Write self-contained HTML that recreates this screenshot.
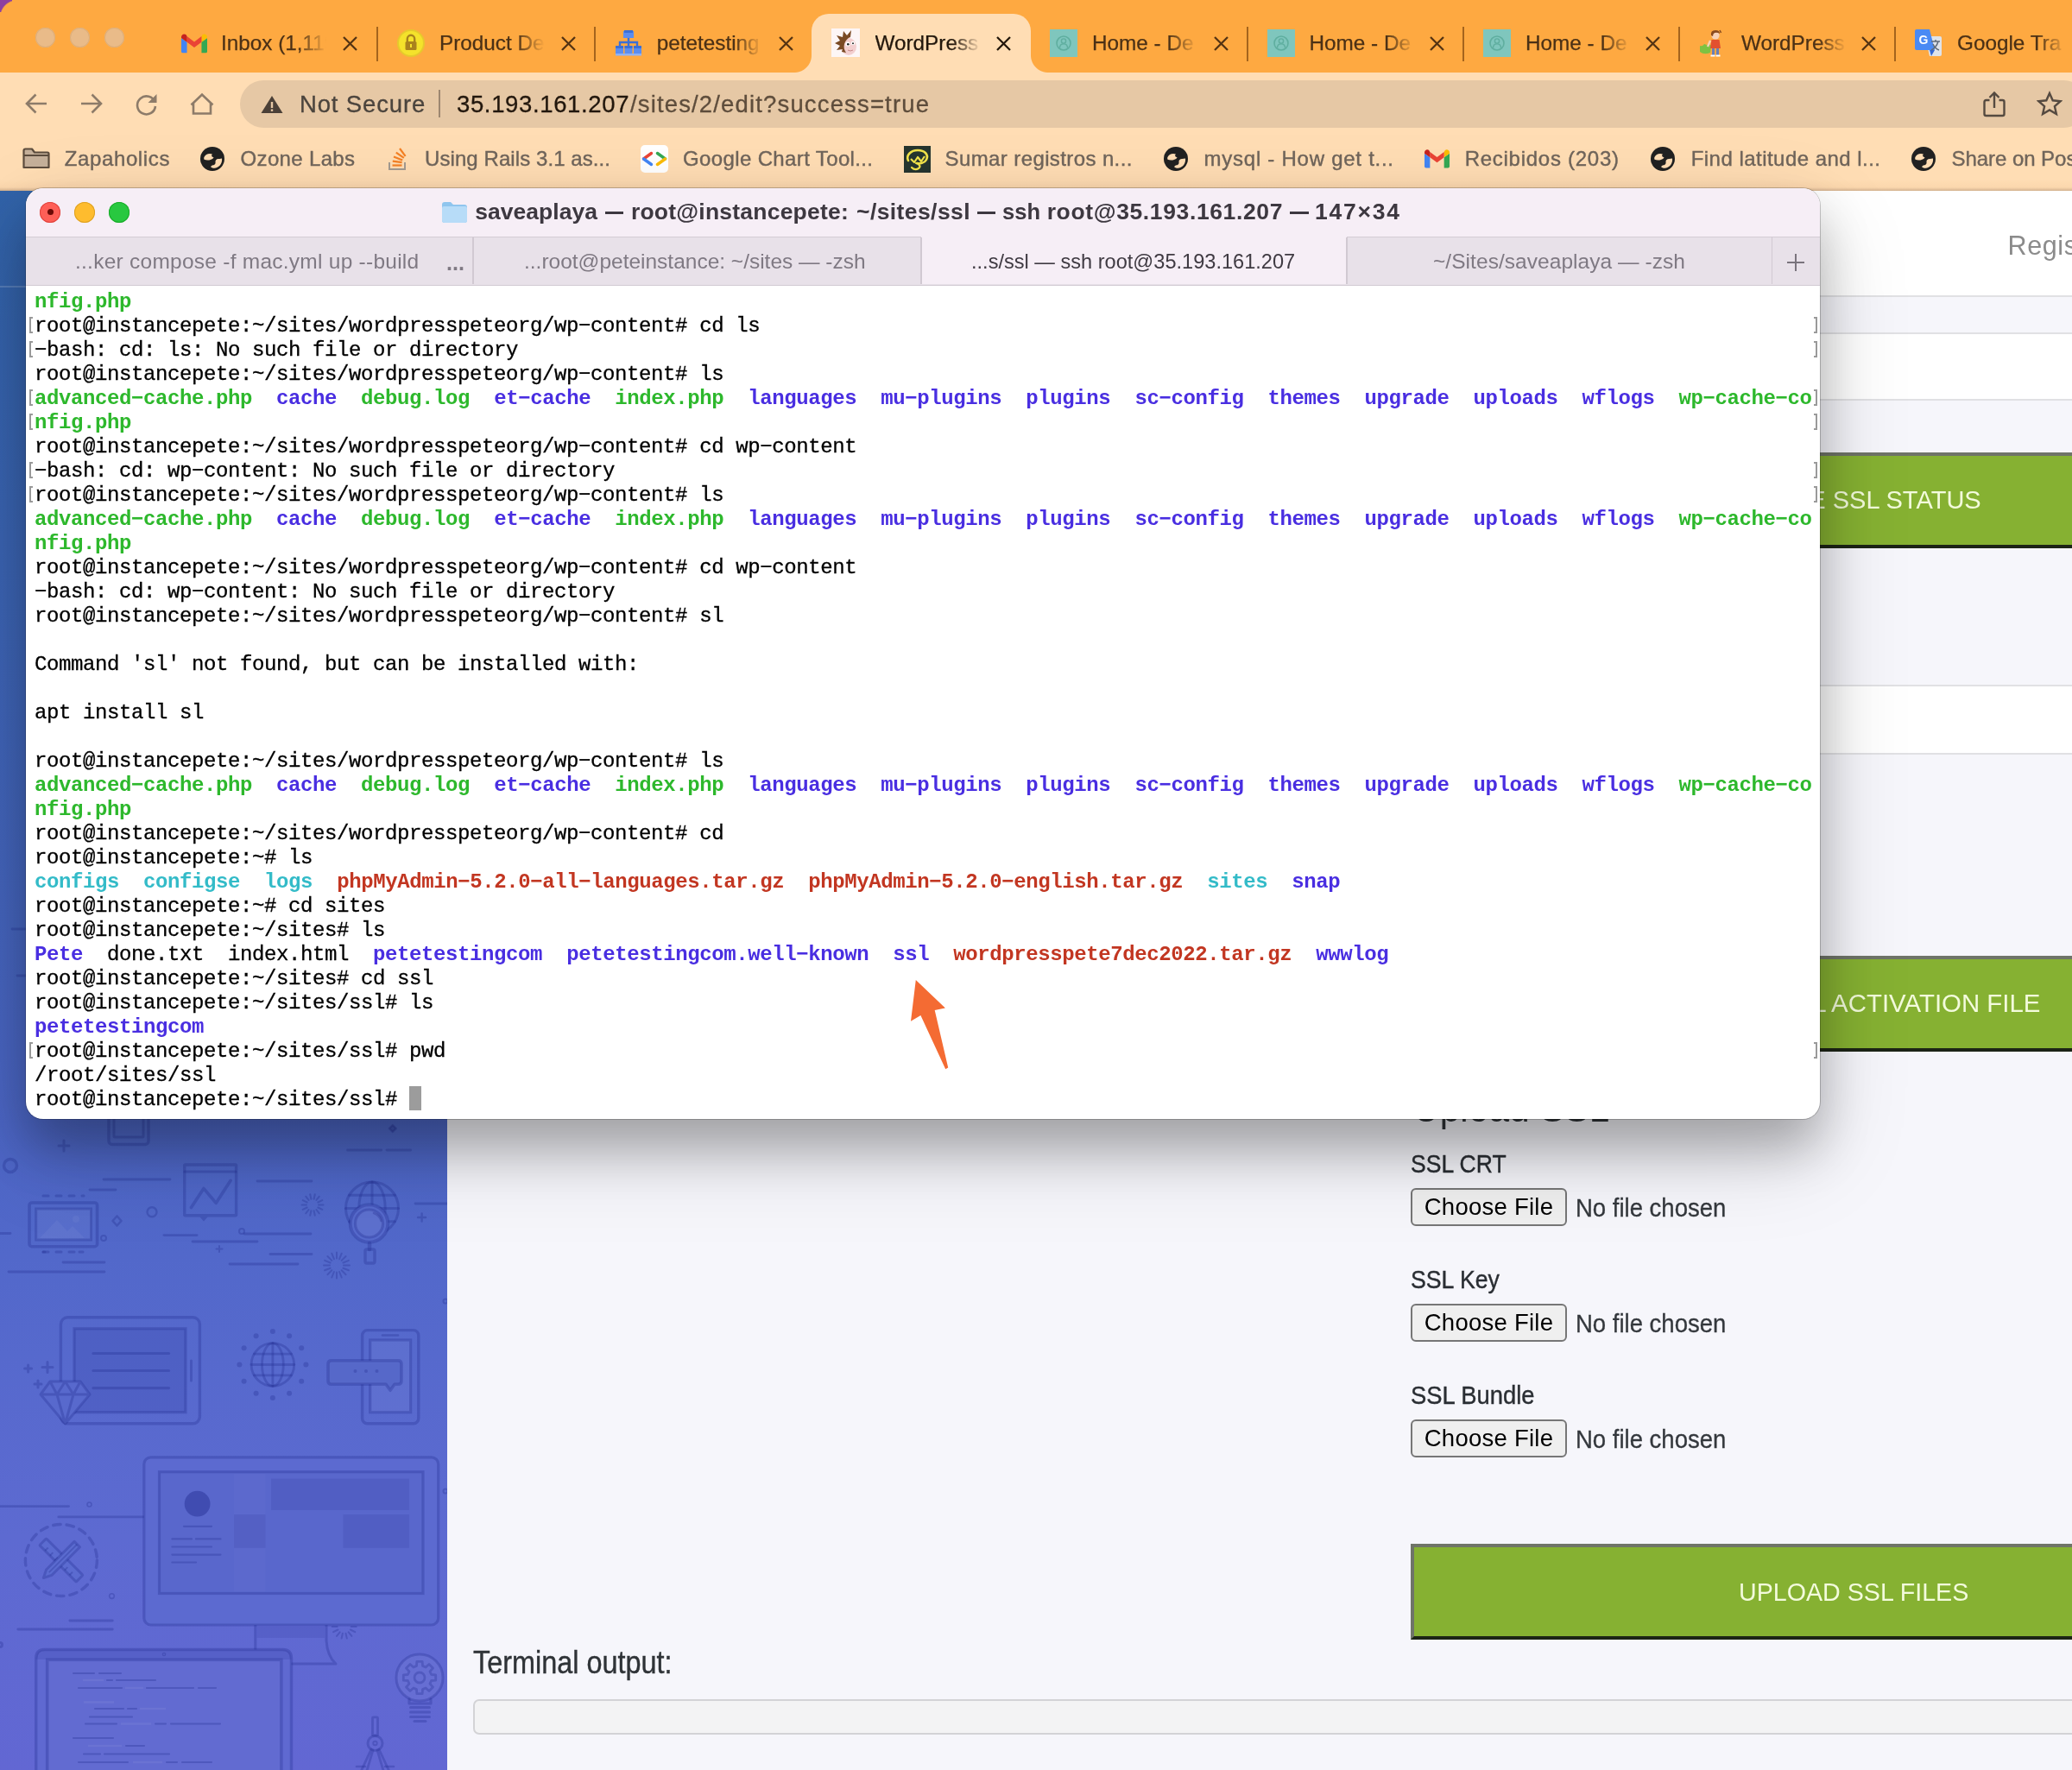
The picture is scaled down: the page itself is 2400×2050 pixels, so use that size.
<!DOCTYPE html>
<html>
<head>
<meta charset="utf-8">
<title>WordPress Pete</title>
<style>
*{box-sizing:border-box;margin:0;padding:0}
html,body{width:2400px;height:2050px;overflow:hidden;background:#f6f6fb;font-family:"Liberation Sans",sans-serif;}
.abs{position:absolute}
#root{position:absolute;left:0;top:0;width:2400px;height:2050px;overflow:hidden;will-change:transform}
/* ---------- browser chrome ---------- */
#tabstrip{position:absolute;left:0;top:0;width:2400px;height:84px;background:#fea941}
#toolbar{position:absolute;left:0;top:84px;width:2400px;height:137px;background:linear-gradient(#ffddb4 0,#ffddb4 124px,#fbd7ad 133px,#e3c19c 135.500px,#d2b08c 137px)}
.tl{position:absolute;top:31px;width:24px;height:24px;border-radius:50%;background:#e8b982;border:1px solid #dcab72}
.tab{position:absolute;top:0;height:84px;font-size:26px;color:#4a3520;white-space:nowrap}
.tab .t{position:absolute;top:34px;left:0;line-height:32px;overflow:hidden}
.tabx{position:absolute;top:36px;width:28px;height:28px}
.tsep{position:absolute;top:31px;width:2px;height:40px;background:#a86a22}
#acttab{position:absolute;left:940px;top:16px;width:254px;height:70px;background:#ffddb4;border-radius:20px 20px 0 0}
#acttab:before,#acttab:after{content:"";position:absolute;bottom:2px;width:20px;height:20px;background:radial-gradient(circle at 0 0,rgba(0,0,0,0) 19.5px,#ffddb4 20.5px)}
#acttab:before{left:-20px}
#acttab:after{right:-20px;background:radial-gradient(circle at 100% 0,rgba(0,0,0,0) 19.5px,#ffddb4 20.5px)}
#urlpill{position:absolute;left:278px;top:93px;width:2140px;height:55px;border-radius:28px;background:#e6c8a5}
.tbtxt{position:absolute;font-size:26px;line-height:32px;white-space:nowrap}
.bm{position:absolute;top:168px;font-size:23.5px;line-height:32px;color:#6b625a;white-space:nowrap}

#term{position:absolute;left:30px;top:217.5px;width:2078px;height:1078px;border-radius:20px;background:#fff;
 box-shadow:0 0 0 1px rgba(0,0,0,.20),0 34px 56px 0 rgba(0,0,0,.25),0 40px 110px 0 rgba(0,0,0,.15);}
#term .clip{position:absolute;left:0;top:0;width:100%;height:100%;border-radius:20px;overflow:hidden}
#ttitle{position:absolute;left:0;top:0;width:100%;height:56.5px;background:#f6eef6}
#ttabs{position:absolute;left:0;top:56.5px;width:100%;height:56.5px;background:#e8e1e9;border-top:1.500px solid #d4ccd5;border-bottom:1.500px solid #d2cbd3}
#ttabs .act{position:absolute;top:-1.500px;height:55.500px;background:#f6eef6}
#ttabs .sep{position:absolute;top:0;width:1.500px;height:54px;background:#d1c9d2}
#tpre{position:absolute;left:10px;top:118.500px;font-family:"Liberation Mono",monospace;font-size:24px;line-height:28px;letter-spacing:-0.400px;color:#000;white-space:pre;-webkit-text-stroke:.3px #000}
#tpre b{font-weight:bold;-webkit-text-stroke:0}
#tpre .g{color:#2db82c}#tpre .b{color:#492ee1}#tpre .c{color:#33bbc8}#tpre .r{color:#c23621}
.brk{position:absolute;width:4px;height:19px;border:2px solid #9a9a9a}
.brk.l{left:4px;border-right:none}
.brk.r{left:2070.500px;border-left:none}

#page{position:absolute;left:0;top:220px;width:2400px;height:1830px;background:#f6f6fb;overflow:hidden}
#side{position:absolute;left:0;top:0;width:518px;height:1830px;background:linear-gradient(180deg,#3163a9 0,#3b65b4 400px,#4a66c4 1000px,#5669cd 1350px,#5d6ad1 1560px,#6267d3 1830px)}
.stripe{position:absolute;left:518px;width:1900px}
.gbtn{position:absolute;height:111px;background:#86b132;border-top:4px solid #6f7468;border-bottom:4.500px solid #1c2416;border-left:4px solid #6f7468}
.cfb{position:absolute;left:1634.400px;width:180.200px;height:44px;border:2px solid #767676;border-radius:6px;background:#efefef;
 font-size:27.500px;line-height:39px;color:#000;text-align:center;white-space:nowrap;letter-spacing:.25px}
</style>
</head>
<body>
<div id="root">

<!-- ================= PAGE (behind) ================= -->
<div id="page">
<div id="side"><svg style="position:absolute;left:0;top:0;filter:blur(.7px)" width="518" height="1830" viewBox="0 220 518 1830" fill="none" ><rect x="126" y="1280" width="46" height="45.5" rx="4" fill="none" stroke="rgba(30,40,140,.29)" stroke-width="3.4"/>
<rect x="132" y="1280" width="34" height="37" rx="1" fill="none" stroke="rgba(30,40,140,.29)" stroke-width="3"/>
<path d="M68 1327H80M74 1321V1333" stroke="rgba(30,40,140,.29)" stroke-width="3" stroke-linecap="round"/>
<circle cx="12" cy="1350" r="7.5" fill="none" stroke="rgba(30,40,140,.29)" stroke-width="3.4"/>
<path d="M120 1366L197 1366" stroke="rgba(30,40,140,.29)" stroke-width="2.8" stroke-linecap="round"/>
<path d="M104 1378L134 1378" stroke="rgba(30,40,140,.29)" stroke-width="2.8" stroke-linecap="round"/>
<rect x="34" y="1393" width="78.6" height="50.7" rx="3" fill="none" stroke="rgba(30,40,140,.29)" stroke-width="3.6"/>
<rect x="41.7" y="1400" width="63.8" height="36" rx="0" fill="rgba(255,255,255,.045)" stroke="rgba(30,40,140,.29)" stroke-width="3"/>
<path d="M46 1434L66 1413L78 1426L84 1420L98 1434Z" fill="rgba(255,255,255,.045)"/>
<circle cx="88" cy="1412" r="4" fill="rgba(255,255,255,.045)"/>
<path d="M50 1385L56 1385" stroke="rgba(30,40,140,.29)" stroke-width="3" stroke-linecap="round"/>
<path d="M50 1450L56 1450" stroke="rgba(30,40,140,.29)" stroke-width="3" stroke-linecap="round"/>
<path d="M65 1385L71 1385" stroke="rgba(30,40,140,.29)" stroke-width="3" stroke-linecap="round"/>
<path d="M65 1450L71 1450" stroke="rgba(30,40,140,.29)" stroke-width="3" stroke-linecap="round"/>
<path d="M80 1385L86 1385" stroke="rgba(30,40,140,.29)" stroke-width="3" stroke-linecap="round"/>
<path d="M80 1450L86 1450" stroke="rgba(30,40,140,.29)" stroke-width="3" stroke-linecap="round"/>
<path d="M95 1385L97 1385" stroke="rgba(30,40,140,.29)" stroke-width="3" stroke-linecap="round"/>
<path d="M50 1450L52 1450" stroke="rgba(30,40,140,.29)" stroke-width="3" stroke-linecap="round"/>
<path d="M92 1450L96 1450" stroke="rgba(30,40,140,.29)" stroke-width="3" stroke-linecap="round"/>
<path d="M73 1462L121 1462" stroke="rgba(30,40,140,.29)" stroke-width="2.8" stroke-linecap="round"/>
<path d="M10 1473L121 1473" stroke="rgba(30,40,140,.29)" stroke-width="2.8" stroke-linecap="round"/>
<path d="M0 1428.5L12 1428.5" stroke="rgba(30,40,140,.29)" stroke-width="2.8" stroke-linecap="round"/>
<path d="M14 1076L30 1076" stroke="rgba(30,40,140,.29)" stroke-width="2.8" stroke-linecap="round"/>
<path d="M20 1130L30 1130" stroke="rgba(30,40,140,.29)" stroke-width="2.8" stroke-linecap="round"/>
<rect x="213.7" y="1349" width="59.9" height="58.7" rx="1" fill="none" stroke="rgba(30,40,140,.29)" stroke-width="3.4"/>
<path d="M214 1357L273 1357" stroke="rgba(30,40,140,.29)" stroke-width="3" stroke-linecap="round"/>
<path d="M221.5 1398.6L235.9 1376.4L250.2 1393.4L267.1 1367.3" fill="none" stroke="rgba(30,40,140,.29)" stroke-width="3.6" stroke-linejoin="round" stroke-linecap="round"/>
<path d="M231.500 1409.500h9l-4.500 5z" fill="rgba(30,40,140,.29)"/>
<path d="M135.500 1408.500l5 5.500-5 5.500-5-5.500z" fill="none" stroke="rgba(30,40,140,.29)" stroke-width="2.6" stroke-linejoin="round" stroke-linecap="round"/>
<circle cx="176" cy="1403.8" r="5.5" fill="none" stroke="rgba(30,40,140,.29)" stroke-width="2.4"/>
<circle cx="120" cy="1434" r="3" fill="none" stroke="rgba(30,40,140,.29)" stroke-width="2"/>
<circle cx="280" cy="1426" r="3" fill="none" stroke="rgba(30,40,140,.29)" stroke-width="2"/>
<path d="M298 1368L361 1368" stroke="rgba(30,40,140,.29)" stroke-width="2.8" stroke-linecap="round"/>
<path d="M190 1430.6L228 1430.6" stroke="rgba(30,40,140,.29)" stroke-width="2.8" stroke-linecap="round"/>
<path d="M283 1429L360 1429" stroke="rgba(30,40,140,.29)" stroke-width="2.8" stroke-linecap="round"/>
<path d="M223 1438L298 1438" stroke="rgba(30,40,140,.29)" stroke-width="2.8" stroke-linecap="round"/>
<path d="M313 1452.5L361 1452.5" stroke="rgba(30,40,140,.29)" stroke-width="2.8" stroke-linecap="round"/>
<path d="M266 1464L345 1464" stroke="rgba(30,40,140,.29)" stroke-width="2.8" stroke-linecap="round"/>
<path d="M250.5 1446.5H257.5M254 1443.0V1450.0" stroke="rgba(30,40,140,.29)" stroke-width="2" stroke-linecap="round"/>
<path d="M369.0 1395.5L374.5 1395.5M368.3 1398.5L373.3 1400.9M366.4 1401.0L369.8 1405.3M363.6 1402.3L364.8 1407.7M360.4 1402.3L359.2 1407.7M357.6 1401.0L354.2 1405.3M355.7 1398.5L350.7 1400.9M355.0 1395.5L349.5 1395.5M355.7 1392.5L350.7 1390.1M357.6 1390.0L354.2 1385.7M360.4 1388.7L359.2 1383.3M363.6 1388.7L364.8 1383.3M366.4 1390.0L369.8 1385.7M368.3 1392.5L373.3 1390.1" stroke="rgba(30,40,140,.29)" stroke-width="2" stroke-linecap="round"/>
<path d="M398.0 1465.6L405.0 1465.6M397.4 1468.7L403.9 1471.3M395.7 1471.3L400.6 1476.2M393.1 1473.0L395.7 1479.5M390.0 1473.6L390.0 1480.6M386.9 1473.0L384.3 1479.5M384.3 1471.3L379.4 1476.2M382.6 1468.7L376.1 1471.3M382.0 1465.6L375.0 1465.6M382.6 1462.5L376.1 1459.9M384.3 1459.9L379.4 1455.0M386.9 1458.2L384.3 1451.7M390.0 1457.6L390.0 1450.6M393.1 1458.2L395.7 1451.7M395.7 1459.9L400.6 1455.0M397.4 1462.5L403.9 1459.9" stroke="rgba(30,40,140,.29)" stroke-width="2" stroke-linecap="round"/>
<circle cx="431" cy="1399.5" r="30.5" fill="none" stroke="rgba(30,40,140,.29)" stroke-width="3"/><ellipse cx="431" cy="1399.5" rx="15.2" ry="30.5" fill="none" stroke="rgba(30,40,140,.29)" stroke-width="3"/><path d="M431 1369.0L431 1430.0" stroke="rgba(30,40,140,.29)" stroke-width="3" stroke-linecap="round"/><path d="M400.5 1399.5L461.5 1399.5" stroke="rgba(30,40,140,.29)" stroke-width="3" stroke-linecap="round"/><path d="M404.6 1384.25L457.4 1384.25" stroke="rgba(30,40,140,.29)" stroke-width="3" stroke-linecap="round"/><path d="M404.6 1414.75L457.4 1414.75" stroke="rgba(30,40,140,.29)" stroke-width="3" stroke-linecap="round"/>
<circle cx="427.500" cy="1417" r="22" fill="#566acc"/>
<circle cx="427.5" cy="1417" r="21.8" fill="none" stroke="rgba(30,40,140,.29)" stroke-width="4"/>
<circle cx="427.5" cy="1417" r="16" fill="rgba(255,255,255,.045)" stroke="rgba(30,40,140,.29)" stroke-width="3.2"/>
<path d="M433 1405q7 2.500 8.500 9" fill="none" stroke="rgba(30,40,140,.29)" stroke-width="2.6" stroke-linejoin="round" stroke-linecap="round"/>
<path d="M428 1440L428 1447" stroke="rgba(30,40,140,.29)" stroke-width="4.5" stroke-linecap="round"/>
<rect x="423" y="1447" width="11" height="16" rx="2" fill="none" stroke="rgba(30,40,140,.29)" stroke-width="3.4"/>
<path d="M402.6 1332L441.7 1332" stroke="rgba(30,40,140,.29)" stroke-width="2.8" stroke-linecap="round"/>
<path d="M448 1332L475.6 1332" stroke="rgba(30,40,140,.29)" stroke-width="2.8" stroke-linecap="round"/>
<path d="M454.800 1303l4 4-4 4-4-4z" fill="rgba(30,40,140,.29)" stroke="rgba(30,40,140,.29)" stroke-width="2.4" stroke-linejoin="round" stroke-linecap="round"/>
<path d="M481 1394L518 1394" stroke="rgba(30,40,140,.29)" stroke-width="2.8" stroke-linecap="round"/>
<path d="M484.1 1410H493.1M488.6 1405.5V1414.5" stroke="rgba(30,40,140,.29)" stroke-width="2.4" stroke-linecap="round"/>
<circle cx="516" cy="1507" r="2.5" fill="none" stroke="rgba(30,40,140,.29)" stroke-width="2"/>
<rect x="70.4" y="1525.8" width="161.0" height="123.0" rx="8" fill="none" stroke="rgba(30,40,140,.29)" stroke-width="3.4"/>
<rect x="86" y="1538.8" width="129" height="96.9" rx="0" fill="rgba(30,40,140,.13)" stroke="rgba(30,40,140,.29)" stroke-width="3.2"/>
<path d="M108 1567.5L195.5 1567.5" stroke="rgba(30,40,140,.29)" stroke-width="3.2" stroke-linecap="round"/>
<path d="M108 1587.5L195.5 1587.5" stroke="rgba(30,40,140,.29)" stroke-width="3.2" stroke-linecap="round"/>
<path d="M108 1607.6L195.5 1607.6" stroke="rgba(30,40,140,.29)" stroke-width="3.2" stroke-linecap="round"/>
<path d="M221.5 1576L221.5 1599" stroke="rgba(30,40,140,.29)" stroke-width="3" stroke-linecap="round"/>
<path d="M47 1615L58 1600H93L104 1615L75.500 1649Z" fill="#5869cd"/>
<path d="M47 1615L58 1600H93L104 1615L75.500 1649ZM47 1615H104M58 1600L66 1615L75.500 1600L85 1615L93 1600M66 1615L75.500 1649L85 1615" fill="none" stroke="rgba(30,40,140,.29)" stroke-width="3" stroke-linejoin="round" stroke-linecap="round"/>
<path d="M28.6 1585H36.6M32.6 1581V1589" stroke="rgba(30,40,140,.29)" stroke-width="3" stroke-linecap="round"/>
<path d="M49 1583.6H61M55 1577.6V1589.6" stroke="rgba(30,40,140,.29)" stroke-width="3" stroke-linecap="round"/>
<path d="M40 1603H48M44 1599V1607" stroke="rgba(30,40,140,.29)" stroke-width="3" stroke-linecap="round"/>
<circle cx="315.9" cy="1580.5" r="24.8" fill="none" stroke="rgba(30,40,140,.29)" stroke-width="2.8"/><ellipse cx="315.9" cy="1580.5" rx="12.4" ry="24.8" fill="none" stroke="rgba(30,40,140,.29)" stroke-width="2.8"/><path d="M315.9 1555.7L315.9 1605.3" stroke="rgba(30,40,140,.29)" stroke-width="2.8" stroke-linecap="round"/><path d="M291.09999999999997 1580.5L340.7 1580.5" stroke="rgba(30,40,140,.29)" stroke-width="2.8" stroke-linecap="round"/><path d="M294.4 1568.1L337.4 1568.1" stroke="rgba(30,40,140,.29)" stroke-width="2.8" stroke-linecap="round"/><path d="M294.4 1592.9L337.4 1592.9" stroke="rgba(30,40,140,.29)" stroke-width="2.8" stroke-linecap="round"/>
<circle cx="315.9" cy="1619.0" r="3" fill="rgba(30,40,140,.29)"/>
<circle cx="296.6" cy="1613.8" r="3" fill="rgba(30,40,140,.29)"/>
<circle cx="282.6" cy="1599.8" r="3" fill="rgba(30,40,140,.29)"/>
<circle cx="277.4" cy="1580.5" r="3" fill="rgba(30,40,140,.29)"/>
<circle cx="282.6" cy="1561.2" r="3" fill="rgba(30,40,140,.29)"/>
<circle cx="296.6" cy="1547.2" r="3" fill="rgba(30,40,140,.29)"/>
<circle cx="315.9" cy="1542.0" r="3" fill="rgba(30,40,140,.29)"/>
<circle cx="335.1" cy="1547.2" r="3" fill="rgba(30,40,140,.29)"/>
<circle cx="349.2" cy="1561.2" r="3" fill="rgba(30,40,140,.29)"/>
<circle cx="354.4" cy="1580.5" r="3" fill="rgba(30,40,140,.29)"/>
<circle cx="349.2" cy="1599.8" r="3" fill="rgba(30,40,140,.29)"/>
<circle cx="335.1" cy="1613.8" r="3" fill="rgba(30,40,140,.29)"/>
<rect x="419.6" y="1540.6" width="65.2" height="108.2" rx="6" fill="none" stroke="rgba(30,40,140,.29)" stroke-width="3.4"/>
<rect x="428.7" y="1552" width="46.9" height="83.7" rx="0" fill="rgba(255,255,255,.045)" stroke="rgba(30,40,140,.29)" stroke-width="3.2"/>
<path d="M443 1546.5L461 1546.5" stroke="rgba(30,40,140,.29)" stroke-width="2.6" stroke-linecap="round"/>
<path d="M384 1575.800H461q4 0 4 4v19.500q0 4-4 4h-4l-5 7-5-7H384q-4 0-4-4v-19.500q0-4 4-4z" fill="#5668c9" stroke="rgba(30,40,140,.29)" stroke-width="3.600" stroke-linejoin="round"/>
<circle cx="411.5" cy="1588" r="2" fill="rgba(30,40,140,.29)"/>
<circle cx="424" cy="1588" r="2" fill="rgba(30,40,140,.29)"/>
<circle cx="436.5" cy="1588" r="2" fill="rgba(30,40,140,.29)"/>
<circle cx="516" cy="1727" r="2.5" fill="none" stroke="rgba(30,40,140,.29)" stroke-width="2"/>
<path d="M0 1744.6L79.5 1744.6" stroke="rgba(30,40,140,.29)" stroke-width="2.8" stroke-linecap="round"/>
<path d="M67.8 1756.9L166.8 1756.9" stroke="rgba(30,40,140,.29)" stroke-width="2.8" stroke-linecap="round"/>
<circle cx="103.5" cy="1742.5" r="2.5" fill="none" stroke="rgba(30,40,140,.29)" stroke-width="1.6"/>
<circle cx="129.5" cy="1848.6" r="2.8" fill="none" stroke="rgba(30,40,140,.29)" stroke-width="1.6"/>
<path d="M295.800 1882V1911M378 1882V1900Q379 1918 389 1927H337" fill="none" stroke="rgba(30,40,140,.29)" stroke-width="3" stroke-linejoin="round" stroke-linecap="round"/>
<rect x="297.5" y="1884" width="78.5" height="13" rx="0" fill="rgba(30,40,140,.13)"/>
<path d="M406.7 1884.0L412.7 1884.0M405.9 1887.5L411.3 1890.1M403.7 1890.3L407.4 1894.9M400.5 1891.8L401.8 1897.6M396.9 1891.8L395.6 1897.6M393.7 1890.3L390.0 1894.9M391.5 1887.5L386.1 1890.1M390.7 1884.0L384.7 1884.0M391.5 1880.5L386.1 1877.9M393.7 1877.7L390.0 1873.1M396.9 1876.2L395.6 1870.4M400.5 1876.2L401.8 1870.4M403.7 1877.7L407.4 1873.1M405.9 1880.5L411.3 1877.9" stroke="rgba(30,40,140,.29)" stroke-width="2" stroke-linecap="round"/>
<rect x="166.800" y="1687.800" width="340.900" height="194.200" rx="9" fill="#5c6ad0"/>
<rect x="166.8" y="1687.8" width="340.9" height="194.2" rx="8" fill="none" stroke="rgba(30,40,140,.29)" stroke-width="3.2"/>
<rect x="184.5" y="1704.7" width="305.5" height="140.8" rx="0" fill="rgba(30,40,140,.04)" stroke="rgba(30,40,140,.29)" stroke-width="3.2"/>
<rect x="271" y="1707" width="36.5" height="136.5" rx="0" fill="rgba(255,255,255,.02)"/>
<circle cx="228.600" cy="1741.700" r="14.900" fill="rgba(30,40,140,.42)"/>
<path d="M213 1767.8L245 1767.8" stroke="rgba(30,40,140,.29)" stroke-width="2.2" stroke-linecap="round"/>
<path d="M199.4 1782.4L222 1782.4" stroke="rgba(30,40,140,.29)" stroke-width="2.2" stroke-linecap="round"/>
<path d="M227 1782.4L255.4 1782.4" stroke="rgba(30,40,140,.29)" stroke-width="2.2" stroke-linecap="round"/>
<path d="M199.4 1791.5L245 1791.5" stroke="rgba(30,40,140,.29)" stroke-width="2.2" stroke-linecap="round"/>
<path d="M199.4 1800.6L255.4 1800.6" stroke="rgba(30,40,140,.29)" stroke-width="2.2" stroke-linecap="round"/>
<path d="M199.4 1809.5L227 1809.5" stroke="rgba(30,40,140,.29)" stroke-width="2.2" stroke-linecap="round"/>
<rect x="314" y="1712.5" width="160" height="36.5" rx="0" fill="rgba(30,40,140,.13)"/>
<rect x="271" y="1754" width="36.5" height="38.8" rx="0" fill="rgba(30,40,140,.13)"/>
<rect x="397.4" y="1754" width="76.6" height="38.8" rx="0" fill="rgba(30,40,140,.13)"/>
<circle cx="70.900" cy="1807" r="41.500" fill="none" stroke="rgba(30,40,140,.29)" stroke-width="3.400" stroke-dasharray="8.500 7" stroke-linecap="round"/>
<g transform="rotate(-45 70.900 1807)"><rect x="65.400" y="1777" width="11" height="60" rx="1" fill="#5b6bd0" stroke="rgba(30,40,140,.29)" stroke-width="3"/><path d="M65.400 1786h5M65.400 1794h5M65.400 1802h5M65.400 1810h5M65.400 1818h5M65.400 1826h5" stroke="rgba(30,40,140,.29)" stroke-width="2"/></g>
<g transform="rotate(45 70.900 1807)"><path d="M66.400 1781h9v46l-4.500 9-4.500-9z" fill="#5b6bd0" stroke="rgba(30,40,140,.29)" stroke-width="3" stroke-linejoin="round"/><path d="M70.900 1781v46" stroke="rgba(30,40,140,.29)" stroke-width="2"/></g>
<path d="M80.8 1877L130.3 1877" stroke="rgba(30,40,140,.29)" stroke-width="2.8" stroke-linecap="round"/>
<path d="M20.8 1887L130.3 1887" stroke="rgba(30,40,140,.29)" stroke-width="2.8" stroke-linecap="round"/>
<circle cx="0" cy="1905" r="2.5" fill="none" stroke="rgba(30,40,140,.29)" stroke-width="3"/>
<path d="M41.700 2060V1921q0-10.500 10-10.500H327.500q10 0 10 10.500V2060z" fill="#5f69d1" stroke="rgba(30,40,140,.29)" stroke-width="3.400"/>
<path d="M41.700 1922H337.500V1921q0-10.500-10-10.500H51.700q-10 0-10 10.500z" fill="rgba(30,40,140,.13)"/>
<rect x="54.7" y="1922.3" width="271.1" height="137.7" rx="0" fill="rgba(255,255,255,.02)" stroke="rgba(30,40,140,.29)" stroke-width="3.6"/>
<circle cx="190" cy="1916" r="1.6" fill="none" stroke="rgba(30,40,140,.29)" stroke-width="1.4"/>
<path d="M85 1938L109 1938" stroke="rgba(30,40,140,.29)" stroke-width="2.1" stroke-linecap="round"/>
<path d="M115 1938L140 1938" stroke="rgba(30,40,140,.29)" stroke-width="2.1" stroke-linecap="round"/>
<path d="M124 1946L130 1946" stroke="rgba(30,40,140,.29)" stroke-width="2.1" stroke-linecap="round"/>
<path d="M135 1946L180 1946" stroke="rgba(30,40,140,.29)" stroke-width="2.1" stroke-linecap="round"/>
<path d="M91 1955L141 1955" stroke="rgba(30,40,140,.29)" stroke-width="2.1" stroke-linecap="round"/>
<path d="M170 1955L224 1955" stroke="rgba(30,40,140,.29)" stroke-width="2.1" stroke-linecap="round"/>
<path d="M230 1955L250 1955" stroke="rgba(30,40,140,.29)" stroke-width="2.1" stroke-linecap="round"/>
<path d="M110 1979L143 1979" stroke="rgba(30,40,140,.29)" stroke-width="2.1" stroke-linecap="round"/>
<path d="M148 1979L158 1979" stroke="rgba(30,40,140,.29)" stroke-width="2.1" stroke-linecap="round"/>
<path d="M104 1988.5L153 1988.5" stroke="rgba(30,40,140,.29)" stroke-width="2.1" stroke-linecap="round"/>
<path d="M99 1996.5L135 1996.5" stroke="rgba(30,40,140,.29)" stroke-width="2.1" stroke-linecap="round"/>
<path d="M180 1996.5L192 1996.5" stroke="rgba(30,40,140,.29)" stroke-width="2.1" stroke-linecap="round"/>
<path d="M198 1996.5L255 1996.5" stroke="rgba(30,40,140,.29)" stroke-width="2.1" stroke-linecap="round"/>
<path d="M85 2013L131 2013" stroke="rgba(30,40,140,.29)" stroke-width="2.1" stroke-linecap="round"/>
<path d="M146 2022L167 2022" stroke="rgba(30,40,140,.29)" stroke-width="2.1" stroke-linecap="round"/>
<path d="M97 2031.5L116 2031.5" stroke="rgba(30,40,140,.29)" stroke-width="2.1" stroke-linecap="round"/>
<path d="M121 2031.5L196 2031.5" stroke="rgba(30,40,140,.29)" stroke-width="2.1" stroke-linecap="round"/>
<path d="M91 2041L148 2041" stroke="rgba(30,40,140,.29)" stroke-width="2.1" stroke-linecap="round"/>
<path d="M193 2041L205 2041" stroke="rgba(30,40,140,.29)" stroke-width="2.1" stroke-linecap="round"/>
<path d="M211 2041L245 2041" stroke="rgba(30,40,140,.29)" stroke-width="2.1" stroke-linecap="round"/>
<path d="M96 1946H120" stroke="rgba(255,255,255,.06)" stroke-width="2.400"/>
<path d="M145 1955H166" stroke="rgba(255,255,255,.06)" stroke-width="2.400"/>
<path d="M97 1971.5H132" stroke="rgba(255,255,255,.06)" stroke-width="2.400"/>
<path d="M162 1979H192" stroke="rgba(255,255,255,.06)" stroke-width="2.400"/>
<path d="M140 1996.5H175" stroke="rgba(255,255,255,.06)" stroke-width="2.400"/>
<path d="M102 2022H141" stroke="rgba(255,255,255,.06)" stroke-width="2.400"/>
<path d="M154 2041H188" stroke="rgba(255,255,255,.06)" stroke-width="2.400"/>
<circle cx="486" cy="1943" r="27" fill="rgba(255,255,255,.045)" stroke="rgba(30,40,140,.29)" stroke-width="3"/>
<path d="M474 1968v5h25v-5" fill="none" stroke="rgba(30,40,140,.29)" stroke-width="3.2" stroke-linejoin="round" stroke-linecap="round"/>
<path d="M475.5 1977.5L497.5 1977.5" stroke="rgba(30,40,140,.29)" stroke-width="3" stroke-linecap="round"/>
<path d="M475.5 1983L497.5 1983" stroke="rgba(30,40,140,.29)" stroke-width="3" stroke-linecap="round"/>
<path d="M475.5 1988.5L497.5 1988.5" stroke="rgba(30,40,140,.29)" stroke-width="3" stroke-linecap="round"/>
<path d="M480 1993.5L493 1993.5" stroke="rgba(30,40,140,.29)" stroke-width="3" stroke-linecap="round"/>
<path d="M504.7 1939.8L504.7 1946.2L499.6 1946.5L498.0 1950.1L501.5 1954.0L497.0 1958.5L493.1 1955.0L489.5 1956.6L489.2 1961.7L482.8 1961.7L482.5 1956.6L478.9 1955.0L475.0 1958.5L470.5 1954.0L474.0 1950.1L472.4 1946.5L467.3 1946.2L467.3 1939.8L472.4 1939.5L474.0 1935.9L470.5 1932.0L475.0 1927.5L478.9 1931.0L482.5 1929.4L482.8 1924.3L489.2 1924.3L489.5 1929.4L493.1 1931.0L497.0 1927.5L501.5 1932.0L498.0 1935.9L499.6 1939.5Z" fill="none" stroke="rgba(30,40,140,.29)" stroke-width="2.8" stroke-linejoin="round" stroke-linecap="round"/>
<circle cx="486" cy="1943" r="6" fill="none" stroke="rgba(30,40,140,.29)" stroke-width="2.8"/>
<rect x="431.5" y="1988.8" width="6.0" height="21.2" rx="1" fill="none" stroke="rgba(30,40,140,.29)" stroke-width="2.8"/>
<circle cx="434.5" cy="2019" r="8.5" fill="none" stroke="rgba(30,40,140,.29)" stroke-width="3"/>
<circle cx="434.5" cy="2019" r="2.2" fill="none" stroke="rgba(30,40,140,.29)" stroke-width="2"/>
<path d="M430 2026L417 2054M439 2026L452 2054M432 2027L424 2054M437 2027L445 2054" fill="none" stroke="rgba(30,40,140,.29)" stroke-width="2.8" stroke-linejoin="round" stroke-linecap="round"/>
<path d="M413 2046L423 2046" stroke="rgba(30,40,140,.29)" stroke-width="2.6" stroke-linecap="round"/>
<path d="M446 2046L456 2046" stroke="rgba(30,40,140,.29)" stroke-width="2.6" stroke-linecap="round"/></svg><div style="position:absolute;left:0;top:110.500px;width:518px;height:2px;background:rgba(255,255,255,.17)"></div></div>
<div class="stripe" style="top:0px;height:122px;background:#fff"></div>
<div class="stripe" style="top:121.5px;height:2.0px;background:#e1e1e4"></div>
<div style="position:absolute;left:2325.6px;top:42.5px;font-size:30.5px;line-height:43px;color:#8b8b8b;white-space:nowrap;letter-spacing:.6px;">Register</div>
<div class="stripe" style="top:165px;height:77px;background:#fff"></div>
<div class="stripe" style="top:164.5px;height:2.0px;background:#e1e1e4"></div>
<div class="stripe" style="top:241.5px;height:2.0px;background:#e1e1e4"></div>
<div class="stripe" style="top:573px;height:79px;background:#fff"></div>
<div class="stripe" style="top:572.5px;height:2.0px;background:#e1e1e4"></div>
<div class="stripe" style="top:651.5px;height:2.0px;background:#e1e1e4"></div>
<div class="gbtn" style="left:1634.400px;top:304px;width:1025px"></div>
<div style="position:absolute;left:1999px;top:338.3px;font-size:30px;line-height:42px;color:#f3fbdc;transform:scaleX(0.9676);transform-origin:0 50%;white-space:nowrap;">UPDATE SSL STATUS</div>
<div class="gbtn" style="left:1634.400px;top:887px;width:1025px"></div>
<div style="position:absolute;left:1930.6px;top:920.8px;font-size:30px;line-height:42px;color:#f3fbdc;transform:scaleX(0.9800);transform-origin:0 50%;white-space:nowrap;">UPLOAD SSL ACTIVATION FILE</div>
<div style="position:absolute;left:1637px;top:1035.0px;font-size:42px;line-height:59px;color:#2f3337;letter-spacing:0.32px;white-space:nowrap;">Upload SSL</div>
<div style="position:absolute;left:1634.4px;top:1106.6px;font-size:29.5px;line-height:41px;color:#2a2e33;transform:scaleX(0.8995);transform-origin:0 50%;white-space:nowrap;-webkit-text-stroke:.4px #2a2e33;">SSL CRT</div>
<div class="cfb" style="top:1155.8px">Choose File</div>
<div style="position:absolute;left:1824.7px;top:1157.8px;font-size:29.5px;line-height:41px;color:#34383d;transform:scaleX(0.9324);transform-origin:0 50%;white-space:nowrap;-webkit-text-stroke:.3px #34383d;">No file chosen</div>
<div style="position:absolute;left:1634.4px;top:1241.1px;font-size:29.5px;line-height:41px;color:#2a2e33;transform:scaleX(0.9051);transform-origin:0 50%;white-space:nowrap;-webkit-text-stroke:.4px #2a2e33;">SSL Key</div>
<div class="cfb" style="top:1290.0px">Choose File</div>
<div style="position:absolute;left:1824.7px;top:1292.0px;font-size:29.5px;line-height:41px;color:#34383d;transform:scaleX(0.9324);transform-origin:0 50%;white-space:nowrap;-webkit-text-stroke:.3px #34383d;">No file chosen</div>
<div style="position:absolute;left:1634.4px;top:1374.9px;font-size:29.5px;line-height:41px;color:#2a2e33;transform:scaleX(0.9281);transform-origin:0 50%;white-space:nowrap;-webkit-text-stroke:.4px #2a2e33;">SSL Bundle</div>
<div class="cfb" style="top:1424.1px">Choose File</div>
<div style="position:absolute;left:1824.7px;top:1426.1px;font-size:29.5px;line-height:41px;color:#34383d;transform:scaleX(0.9324);transform-origin:0 50%;white-space:nowrap;-webkit-text-stroke:.3px #34383d;">No file chosen</div>
<div class="gbtn" style="left:1634.400px;top:1568px;width:1025px"></div>
<div style="position:absolute;left:2013.7px;top:1602.5px;font-size:30px;line-height:42px;color:#f3fbdc;transform:scaleX(0.9545);transform-origin:0 50%;white-space:nowrap;">UPLOAD SSL FILES</div>
<div style="position:absolute;left:548.4px;top:1679.5px;font-size:37px;line-height:52px;color:#2f3337;transform:scaleX(0.8760);transform-origin:0 50%;white-space:nowrap;-webkit-text-stroke:.4px #2f3337;">Terminal output:</div>
<div style="position:absolute;left:548px;top:1748px;width:1900px;height:41px;background:#f3f3f4;border:2px solid #d3d3d6;border-radius:7px"></div>
</div>

<!-- ================= BROWSER CHROME ================= -->
<div id="toolbar"></div>
<div id="tabstrip"></div>
<div id="chrome">
<div style="position:absolute;left:40.5px;top:31.9px;width:23px;height:23px;border-radius:50%;background:#e9bb89;box-shadow:inset 0 0 0 1px #deae78"></div>
<div style="position:absolute;left:80.5px;top:31.9px;width:23px;height:23px;border-radius:50%;background:#e9bb89;box-shadow:inset 0 0 0 1px #deae78"></div>
<div style="position:absolute;left:120.5px;top:31.9px;width:23px;height:23px;border-radius:50%;background:#e9bb89;box-shadow:inset 0 0 0 1px #deae78"></div>
<div style="position:absolute;left:0;top:0;width:14px;height:14px;background:radial-gradient(circle at 20px 20px,rgba(0,0,0,0) 19px,#8d3fa0 20.5px)"></div>
<div id="acttab"></div>
<svg style="position:absolute;left:209.5px;top:35.5px;" width="30" height="30" viewBox="0 0 32 32" ><path d="M2 27h5V13.5L0 8.5V25a2 2 0 0 0 2 2z" fill="#4285f4"/><path d="M25 27h5a2 2 0 0 0 2-2V8.500l-7 5z" fill="#34a853"/><path d="M25 6.500v7l7-5V7.200c0-3-3.400-4.600-5.700-2.900z" fill="#fbbc04"/><path d="M7 13.500v-7l9 6.700 9-6.700v7l-9 6.700z" fill="#ea4335"/><path d="M0 7.200v1.300l7 5v-7L5.700 4.300C3.400 2.600 0 4.200 0 7.200z" fill="#c5221f"/></svg>
<div style="position:absolute;left:256px;top:33.2px;width:127px;height:34px;overflow:hidden;font-size:24.3px;line-height:34px;color:#4b3116;white-space:nowrap;-webkit-text-stroke:.25px #4b3116;-webkit-mask-image:linear-gradient(90deg,#000 0,#000 89px,rgba(0,0,0,0) 122px);mask-image:linear-gradient(90deg,#000 0,#000 89px,rgba(0,0,0,0) 122px)">Inbox (1,119</div>
<svg style="position:absolute;left:395.5px;top:40.5px;" width="19.0" height="19.0" viewBox="0 0 19.0 19.0" ><path d="M2 2L17.0 17.0M17.0 2L2 17.0" stroke="#553413" stroke-width="2.3" stroke-linecap="butt" fill="none"/></svg>
<svg style="position:absolute;left:460px;top:34px;" width="32" height="32" viewBox="0 0 32 32" ><circle cx="16" cy="16" r="15" fill="#f4e22b" stroke="#e6c92c" stroke-width="2"/><rect x="9.500" y="14" width="13" height="10" rx="1.500" fill="#a9821d"/><path d="M11.800 14v-3a4.200 4.200 0 0 1 8.400 0v3" fill="none" stroke="#a9821d" stroke-width="2.400"/><rect x="15" y="17" width="2" height="4" fill="#f4e22b"/></svg>
<div style="position:absolute;left:509px;top:33.2px;width:127px;height:34px;overflow:hidden;font-size:24.3px;line-height:34px;color:#4b3116;white-space:nowrap;-webkit-text-stroke:.25px #4b3116;-webkit-mask-image:linear-gradient(90deg,#000 0,#000 89px,rgba(0,0,0,0) 122px);mask-image:linear-gradient(90deg,#000 0,#000 89px,rgba(0,0,0,0) 122px)">Product De</div>
<svg style="position:absolute;left:648.5px;top:40.5px;" width="19.0" height="19.0" viewBox="0 0 19.0 19.0" ><path d="M2 2L17.0 17.0M17.0 2L2 17.0" stroke="#553413" stroke-width="2.3" stroke-linecap="butt" fill="none"/></svg>
<svg style="position:absolute;left:713px;top:35px;" width="30" height="30" viewBox="0 0 30 30" ><rect x="9" y="1" width="12" height="8" fill="#5b8def"/><rect x="10" y="0" width="10" height="3" fill="#3b6fd6"/><path d="M15 9v5M5 19v-5h20v5M15 14v5" stroke="#3b6fd6" stroke-width="2.400" fill="none"/><rect x="0" y="18" width="9" height="11" fill="#5b8def"/><rect x="10.500" y="18" width="9" height="11" fill="#5b8def"/><rect x="21" y="18" width="9" height="11" fill="#5b8def"/><rect x="0" y="18" width="9" height="3" fill="#3b6fd6"/><rect x="10.500" y="18" width="9" height="3" fill="#3b6fd6"/><rect x="21" y="18" width="9" height="3" fill="#3b6fd6"/><rect x="0" y="27" width="30" height="2.500" fill="#8fb2f5"/></svg>
<div style="position:absolute;left:760.7px;top:33.2px;width:127px;height:34px;overflow:hidden;font-size:24.3px;line-height:34px;color:#4b3116;white-space:nowrap;-webkit-text-stroke:.25px #4b3116;-webkit-mask-image:linear-gradient(90deg,#000 0,#000 89px,rgba(0,0,0,0) 122px);mask-image:linear-gradient(90deg,#000 0,#000 89px,rgba(0,0,0,0) 122px)">petetesting</div>
<svg style="position:absolute;left:900.5px;top:40.5px;" width="19.0" height="19.0" viewBox="0 0 19.0 19.0" ><path d="M2 2L17.0 17.0M17.0 2L2 17.0" stroke="#553413" stroke-width="2.3" stroke-linecap="butt" fill="none"/></svg>
<svg style="position:absolute;left:963px;top:33px;" width="33" height="33" viewBox="0 0 33 33" ><rect width="33" height="33" fill="#fdf6f6"/><ellipse cx="20" cy="21" rx="9" ry="10" fill="#f3cfcf"/><path d="M6 25 L10 20 L4 17 L10 14 L6 8 L13 10 L14 3 L18 8 L23 2 L22 10 C19 11 16 14 15 18 C14 22 15 25 17 28 L12 27 L13 24 Z" fill="#7a4a24"/><circle cx="19" cy="18" r="2.600" fill="#fff"/><circle cx="19.300" cy="18.300" r="1.300" fill="#222"/><circle cx="25" cy="17" r="2.200" fill="#fff"/><circle cx="25" cy="17.300" r="1" fill="#222"/><path d="M19 25q3 2 6 0" stroke="#c98a8a" stroke-width="1" fill="none"/></svg>
<div style="position:absolute;left:1013.5px;top:33.2px;width:127px;height:34px;overflow:hidden;font-size:24.3px;line-height:34px;color:#21160b;white-space:nowrap;-webkit-text-stroke:.25px #21160b;-webkit-mask-image:linear-gradient(90deg,#000 0,#000 89px,rgba(0,0,0,0) 122px);mask-image:linear-gradient(90deg,#000 0,#000 89px,rgba(0,0,0,0) 122px)">WordPress</div>
<svg style="position:absolute;left:1152.5px;top:40.5px;" width="19.0" height="19.0" viewBox="0 0 19.0 19.0" ><path d="M2 2L17.0 17.0M17.0 2L2 17.0" stroke="#24180c" stroke-width="2.3" stroke-linecap="butt" fill="none"/></svg>
<svg style="position:absolute;left:1216px;top:34px;" width="32" height="32" viewBox="0 0 32 32" ><rect width="32" height="32" fill="#7fc6bd"/><circle cx="16" cy="16" r="8" fill="none" stroke="#5fae9f" stroke-width="1.600"/><circle cx="16" cy="13.500" r="2.600" fill="none" stroke="#5fae9f" stroke-width="1.400"/><path d="M11.500 21.500c0-3 2-4.600 4.500-4.600s4.500 1.600 4.500 4.600" fill="none" stroke="#5fae9f" stroke-width="1.400"/></svg>
<div style="position:absolute;left:1265px;top:33.2px;width:127px;height:34px;overflow:hidden;font-size:24.3px;line-height:34px;color:#4b3116;white-space:nowrap;-webkit-text-stroke:.25px #4b3116;-webkit-mask-image:linear-gradient(90deg,#000 0,#000 89px,rgba(0,0,0,0) 122px);mask-image:linear-gradient(90deg,#000 0,#000 89px,rgba(0,0,0,0) 122px)">Home - De</div>
<svg style="position:absolute;left:1404.5px;top:40.5px;" width="19.0" height="19.0" viewBox="0 0 19.0 19.0" ><path d="M2 2L17.0 17.0M17.0 2L2 17.0" stroke="#553413" stroke-width="2.3" stroke-linecap="butt" fill="none"/></svg>
<svg style="position:absolute;left:1468px;top:34px;" width="32" height="32" viewBox="0 0 32 32" ><rect width="32" height="32" fill="#7fc6bd"/><circle cx="16" cy="16" r="8" fill="none" stroke="#5fae9f" stroke-width="1.600"/><circle cx="16" cy="13.500" r="2.600" fill="none" stroke="#5fae9f" stroke-width="1.400"/><path d="M11.500 21.500c0-3 2-4.600 4.500-4.600s4.500 1.600 4.500 4.600" fill="none" stroke="#5fae9f" stroke-width="1.400"/></svg>
<div style="position:absolute;left:1516.5px;top:33.2px;width:127px;height:34px;overflow:hidden;font-size:24.3px;line-height:34px;color:#4b3116;white-space:nowrap;-webkit-text-stroke:.25px #4b3116;-webkit-mask-image:linear-gradient(90deg,#000 0,#000 89px,rgba(0,0,0,0) 122px);mask-image:linear-gradient(90deg,#000 0,#000 89px,rgba(0,0,0,0) 122px)">Home - De</div>
<svg style="position:absolute;left:1654.5px;top:40.5px;" width="19.0" height="19.0" viewBox="0 0 19.0 19.0" ><path d="M2 2L17.0 17.0M17.0 2L2 17.0" stroke="#553413" stroke-width="2.3" stroke-linecap="butt" fill="none"/></svg>
<svg style="position:absolute;left:1718px;top:34px;" width="32" height="32" viewBox="0 0 32 32" ><rect width="32" height="32" fill="#7fc6bd"/><circle cx="16" cy="16" r="8" fill="none" stroke="#5fae9f" stroke-width="1.600"/><circle cx="16" cy="13.500" r="2.600" fill="none" stroke="#5fae9f" stroke-width="1.400"/><path d="M11.500 21.500c0-3 2-4.600 4.500-4.600s4.500 1.600 4.500 4.600" fill="none" stroke="#5fae9f" stroke-width="1.400"/></svg>
<div style="position:absolute;left:1767px;top:33.2px;width:127px;height:34px;overflow:hidden;font-size:24.3px;line-height:34px;color:#4b3116;white-space:nowrap;-webkit-text-stroke:.25px #4b3116;-webkit-mask-image:linear-gradient(90deg,#000 0,#000 89px,rgba(0,0,0,0) 122px);mask-image:linear-gradient(90deg,#000 0,#000 89px,rgba(0,0,0,0) 122px)">Home - De</div>
<svg style="position:absolute;left:1904.5px;top:40.5px;" width="19.0" height="19.0" viewBox="0 0 19.0 19.0" ><path d="M2 2L17.0 17.0M17.0 2L2 17.0" stroke="#553413" stroke-width="2.3" stroke-linecap="butt" fill="none"/></svg>
<svg style="position:absolute;left:1968px;top:34px;" width="32" height="32" viewBox="0 0 32 32" ><path d="M1 19q3 1 5-2l3 1q3-2 5 1l-1 8q-7 3-12-1z" fill="#7ec242"/><circle cx="19" cy="7" r="4.600" fill="#f6d2b8"/><path d="M14 7q-1-6 5-6q5 0 5 4q-3-2-6-1q-2 1-2 4z" fill="#8a4b1e"/><path d="M24 1l1.500 3" stroke="#8a4b1e" stroke-width="1.500"/><path d="M14.500 12h9l1.500 10h-12z" fill="#e2502f"/><path d="M13 13l-3 7" stroke="#f6d2b8" stroke-width="2.400"/><rect x="15" y="22" width="3" height="8" fill="#6a7fb5"/><rect x="20" y="22" width="3" height="8" fill="#6a7fb5"/><rect x="13.500" y="29.500" width="5" height="2" fill="#fff"/><rect x="19.500" y="29.500" width="5" height="2" fill="#fff"/></svg>
<div style="position:absolute;left:2017px;top:33.2px;width:127px;height:34px;overflow:hidden;font-size:24.3px;line-height:34px;color:#4b3116;white-space:nowrap;-webkit-text-stroke:.25px #4b3116;-webkit-mask-image:linear-gradient(90deg,#000 0,#000 89px,rgba(0,0,0,0) 122px);mask-image:linear-gradient(90deg,#000 0,#000 89px,rgba(0,0,0,0) 122px)">WordPress</div>
<svg style="position:absolute;left:2154.5px;top:40.5px;" width="19.0" height="19.0" viewBox="0 0 19.0 19.0" ><path d="M2 2L17.0 17.0M17.0 2L2 17.0" stroke="#553413" stroke-width="2.3" stroke-linecap="butt" fill="none"/></svg>
<svg style="position:absolute;left:2218px;top:34px;" width="32" height="32" viewBox="0 0 32 32" ><path d="M12 8h17a2 2 0 0 1 2 2v19a2 2 0 0 1-2 2H17z" fill="#dfe3ea"/><path d="M2 0h15l6 24H2a2 2 0 0 1-2-2V2a2 2 0 0 1 2-2z" fill="#4a8af4"/><path d="M17 24h6l-4 7z" fill="#3367d6"/><text x="4.500" y="17" font-family="Liberation Sans" font-weight="bold" font-size="14" fill="#fff">G</text><path d="M19 14h10M24 12v2M27 14q-2 7-8 10M21 17q2 5 7 7" stroke="#5f6b7a" stroke-width="1.500" fill="none"/></svg>
<div style="position:absolute;left:2267px;top:33.2px;width:131px;height:34px;overflow:hidden;font-size:24.3px;line-height:34px;color:#4b3116;white-space:nowrap;-webkit-text-stroke:.25px #4b3116;-webkit-mask-image:linear-gradient(90deg,#000 0,#000 93px,rgba(0,0,0,0) 126px);mask-image:linear-gradient(90deg,#000 0,#000 93px,rgba(0,0,0,0) 126px)">Google Tra</div>
<div style="position:absolute;left:436px;top:31px;width:2.200px;height:40px;background:#a4641d"></div>
<div style="position:absolute;left:688px;top:31px;width:2.200px;height:40px;background:#a4641d"></div>
<div style="position:absolute;left:1444px;top:31px;width:2.200px;height:40px;background:#a4641d"></div>
<div style="position:absolute;left:1694px;top:31px;width:2.200px;height:40px;background:#a4641d"></div>
<div style="position:absolute;left:1944px;top:31px;width:2.200px;height:40px;background:#a4641d"></div>
<div style="position:absolute;left:2194px;top:31px;width:2.200px;height:40px;background:#a4641d"></div>
<svg style="position:absolute;left:27px;top:105px;" width="30" height="30" viewBox="0 0 30 30" ><path d="M27 15H4M14.500 4.500L4 15l10.500 10.500" fill="none" stroke="#8d7b69" stroke-width="2.600"/></svg>
<svg style="position:absolute;left:91px;top:105px;" width="30" height="30" viewBox="0 0 30 30" ><path d="M3 15h23M15.500 4.500L26 15 15.500 25.500" fill="none" stroke="#8d7b69" stroke-width="2.600"/></svg>
<svg style="position:absolute;left:155px;top:105px;" width="30" height="30" viewBox="0 0 30 30" ><path d="M24.500 13.500A10.500 10.500 0 1 0 25 18" fill="none" stroke="#8d7b69" stroke-width="2.600"/><path d="M26.500 4v10h-10z" fill="#8d7b69"/></svg>
<svg style="position:absolute;left:219px;top:105px;" width="30" height="30" viewBox="0 0 30 30" ><path d="M5 14.500V26.500h20V14.500M2.500 16.500L15 4.500l12.500 12" fill="none" stroke="#8d7b69" stroke-width="2.600" stroke-linejoin="miter"/></svg>
<div id="urlpill"></div>
<svg style="position:absolute;left:302px;top:110px;" width="26" height="22" viewBox="0 0 26 22" ><path d="M13 1L25.500 21H.5z" fill="#4b4037"/><rect x="11.800" y="8" width="2.400" height="7" fill="#e6c8a5"/><rect x="11.800" y="16.500" width="2.400" height="2.400" fill="#e6c8a5"/></svg>
<div style="position:absolute;left:347px;top:102.0px;font-size:27.5px;line-height:38px;color:#4b443d;letter-spacing:0.86px;white-space:nowrap;-webkit-text-stroke:.3px #4b443d;">Not Secure</div>
<div style="position:absolute;left:508px;top:104px;width:2px;height:32px;background:#9d8770"></div>
<div style="position:absolute;left:529px;top:102.0px;font-size:27.5px;line-height:38px;color:#22170d;letter-spacing:0.64px;white-space:nowrap;-webkit-text-stroke:.3px #22170d;">35.193.161.207</div>
<div style="position:absolute;left:730px;top:102.0px;font-size:27.5px;line-height:38px;color:#5e4d3c;letter-spacing:1.15px;white-space:nowrap;-webkit-text-stroke:.3px #5e4d3c;">/sites/2/edit?success=true</div>
<svg style="position:absolute;left:2296px;top:105px;" width="28" height="32" viewBox="0 0 28 32" ><path d="M8.500 11H4.500q-2 0-2 2V27q0 2 2 2h19q2 0 2-2V13q0-2-2-2H19.500" fill="none" stroke="#554a40" stroke-width="2.400"/><path d="M14 20V3M8.500 8L14 2.500 19.500 8" fill="none" stroke="#554a40" stroke-width="2.400"/></svg>
<svg style="position:absolute;left:2359px;top:105px;" width="30" height="30" viewBox="0 0 30 30" ><path d="M15 3l3.700 8.300 9 .9-6.800 6 2 8.800L15 22.400 7.100 27l2-8.800-6.800-6 9-.9z" fill="none" stroke="#554a40" stroke-width="2.400" stroke-linejoin="miter"/></svg>
<svg style="position:absolute;left:26px;top:171px;" width="32" height="25" viewBox="0 0 32 25" ><path d="M1.500 23V3.500q0-2 2-2h7.500l3 4h15q1.500 0 1.500 1.500V23z" fill="#c5b09a" stroke="#5c4c3d" stroke-width="2.200" stroke-linejoin="round"/><path d="M1.500 9h29" stroke="#5c4c3d" stroke-width="2"/></svg>
<div style="position:absolute;left:74.7px;top:167.3px;font-size:24px;line-height:34px;color:#70655b;letter-spacing:0.63px;white-space:nowrap;-webkit-text-stroke:.4px #70655b;">Zapaholics</div>
<svg style="position:absolute;left:231.6px;top:170px;" width="28" height="28" viewBox="0 0 28 28" ><circle cx="14" cy="14" r="14" fill="#212121"/><path d="M4.300 12.200C5.800 8.600 10.500 7 14 8.600C12.600 9.800 12.800 11.800 15.600 12.400C13.200 15.600 8 16.200 4.500 14.800C4.200 14 4.100 13 4.300 12.200Z" fill="#ffddb4"/><path d="M25 13.600C22.500 14.400 19.800 13.600 18.200 15.200C16.600 16.800 18.600 18.800 16.600 20.600C15 22 12.800 21.200 12.200 23.400C15 25.800 20 25 22.800 21.600C24.600 19.400 25.400 16.600 25 13.600Z" fill="#ffddb4"/></svg>
<div style="position:absolute;left:278.6px;top:167.3px;font-size:24px;line-height:34px;color:#70655b;letter-spacing:0.33px;white-space:nowrap;-webkit-text-stroke:.4px #70655b;">Ozone Labs</div>
<svg style="position:absolute;left:449px;top:169px;" width="24" height="28" viewBox="0 0 24 28" ><path d="M2 19v8h18v-8" fill="none" stroke="#a39a90" stroke-width="2"/><path d="M5.500 22.500h11" stroke="#f48024" stroke-width="2.200"/><path d="M5.800 17.600l10.800 1.600" stroke="#f48024" stroke-width="2.200"/><path d="M7 12.600l10.200 4" stroke="#f48024" stroke-width="2.200"/><path d="M9.800 7.600l9 6.200" stroke="#f48024" stroke-width="2.200"/><path d="M14 3l6.600 8.800" stroke="#f48024" stroke-width="2.200"/></svg>
<div style="position:absolute;left:492px;top:167.3px;font-size:24px;line-height:34px;color:#70655b;letter-spacing:0.08px;white-space:nowrap;-webkit-text-stroke:.4px #70655b;">Using Rails 3.1 as...</div>
<svg style="position:absolute;left:742px;top:168px;" width="32" height="32" viewBox="0 0 32 32" ><rect width="32" height="32" rx="5" fill="#fff"/><path d="M12.500 9.500l-9 6.500" stroke="#ea4335" stroke-width="3.400" stroke-linecap="round"/><path d="M3.500 16l9 6.500" stroke="#4285f4" stroke-width="3.400" stroke-linecap="round"/><path d="M19.500 9.500l9 6.500" stroke="#34a853" stroke-width="3.400" stroke-linecap="round"/><path d="M28.500 16l-9 6.500" stroke="#fbbc04" stroke-width="3.400" stroke-linecap="round"/></svg>
<div style="position:absolute;left:791px;top:167.3px;font-size:24px;line-height:34px;color:#70655b;letter-spacing:0.37px;white-space:nowrap;-webkit-text-stroke:.4px #70655b;">Google Chart Tool...</div>
<svg style="position:absolute;left:1047px;top:169px;" width="31" height="31" viewBox="0 0 31 31" ><rect width="31" height="31" fill="#26352f"/><path d="M5 17c-3-6 3-12 11-12s13 5 10 11c-2 4-8 5-11 4" fill="none" stroke="#f1e24a" stroke-width="2.600" stroke-linecap="round"/><path d="M8 15l4 4 4-6 4 5 4-6" fill="none" stroke="#f1e24a" stroke-width="2.200" stroke-linejoin="round"/><path d="M14 20c4 1 6 4 3 6s-6 1-8-1" fill="none" stroke="#f1e24a" stroke-width="2.200" stroke-linecap="round"/></svg>
<div style="position:absolute;left:1094.6px;top:167.3px;font-size:24px;line-height:34px;color:#70655b;letter-spacing:0.39px;white-space:nowrap;-webkit-text-stroke:.4px #70655b;">Sumar registros n...</div>
<svg style="position:absolute;left:1347.6px;top:170px;" width="28" height="28" viewBox="0 0 28 28" ><circle cx="14" cy="14" r="14" fill="#212121"/><path d="M4.300 12.200C5.800 8.600 10.500 7 14 8.600C12.600 9.800 12.800 11.800 15.600 12.400C13.200 15.600 8 16.200 4.500 14.800C4.200 14 4.100 13 4.300 12.200Z" fill="#ffddb4"/><path d="M25 13.600C22.500 14.400 19.800 13.600 18.200 15.200C16.600 16.800 18.600 18.800 16.600 20.600C15 22 12.800 21.200 12.200 23.400C15 25.800 20 25 22.800 21.600C24.600 19.400 25.400 16.600 25 13.600Z" fill="#ffddb4"/></svg>
<div style="position:absolute;left:1394.6px;top:167.3px;font-size:24px;line-height:34px;color:#70655b;letter-spacing:0.74px;white-space:nowrap;-webkit-text-stroke:.4px #70655b;">mysql - How get t...</div>
<svg style="position:absolute;left:1650px;top:170px;" width="29" height="29" viewBox="0 0 32 32" ><path d="M2 27h5V13.5L0 8.5V25a2 2 0 0 0 2 2z" fill="#4285f4"/><path d="M25 27h5a2 2 0 0 0 2-2V8.500l-7 5z" fill="#34a853"/><path d="M25 6.500v7l7-5V7.200c0-3-3.400-4.600-5.700-2.900z" fill="#fbbc04"/><path d="M7 13.500v-7l9 6.700 9-6.700v7l-9 6.700z" fill="#ea4335"/><path d="M0 7.200v1.300l7 5v-7L5.700 4.300C3.400 2.600 0 4.200 0 7.200z" fill="#c5221f"/></svg>
<div style="position:absolute;left:1696.7px;top:167.3px;font-size:24px;line-height:34px;color:#70655b;letter-spacing:0.73px;white-space:nowrap;-webkit-text-stroke:.4px #70655b;">Recibidos (203)</div>
<svg style="position:absolute;left:1912px;top:170px;" width="28" height="28" viewBox="0 0 28 28" ><circle cx="14" cy="14" r="14" fill="#212121"/><path d="M4.300 12.200C5.800 8.600 10.500 7 14 8.600C12.600 9.800 12.800 11.800 15.600 12.400C13.200 15.600 8 16.200 4.500 14.800C4.200 14 4.100 13 4.300 12.200Z" fill="#ffddb4"/><path d="M25 13.600C22.500 14.400 19.800 13.600 18.200 15.200C16.600 16.800 18.600 18.800 16.600 20.600C15 22 12.800 21.200 12.200 23.400C15 25.800 20 25 22.800 21.600C24.600 19.400 25.400 16.600 25 13.600Z" fill="#ffddb4"/></svg>
<div style="position:absolute;left:1958.7px;top:167.3px;font-size:24px;line-height:34px;color:#70655b;letter-spacing:0.47px;white-space:nowrap;-webkit-text-stroke:.4px #70655b;">Find latitude and l...</div>
<svg style="position:absolute;left:2214px;top:170px;" width="28" height="28" viewBox="0 0 28 28" ><circle cx="14" cy="14" r="14" fill="#212121"/><path d="M4.300 12.200C5.800 8.600 10.500 7 14 8.600C12.600 9.800 12.800 11.800 15.600 12.400C13.200 15.600 8 16.200 4.500 14.800C4.200 14 4.100 13 4.300 12.200Z" fill="#ffddb4"/><path d="M25 13.600C22.500 14.400 19.800 13.600 18.200 15.200C16.600 16.800 18.600 18.800 16.600 20.600C15 22 12.800 21.200 12.200 23.400C15 25.800 20 25 22.800 21.600C24.600 19.400 25.400 16.600 25 13.600Z" fill="#ffddb4"/></svg>
<div style="position:absolute;left:2260.5px;top:167.3px;font-size:24px;line-height:34px;color:#70655b;letter-spacing:-0.05px;white-space:nowrap;-webkit-text-stroke:.4px #70655b;">Share on Post</div>
</div>

<!-- ================= TERMINAL ================= -->
<div id="term">
<div class="clip">
<div id="ttitle"></div>
<div style="position:absolute;left:16px;top:16.3px;width:24px;height:24px;border-radius:50%;background:#fe5f57;box-shadow:inset 0 0 0 1px #e0443e"></div>
<div style="position:absolute;left:56px;top:16.3px;width:24px;height:24px;border-radius:50%;background:#febc2e;box-shadow:inset 0 0 0 1px #dea123"></div>
<div style="position:absolute;left:96px;top:16.3px;width:24px;height:24px;border-radius:50%;background:#28c840;box-shadow:inset 0 0 0 1px #1aab29"></div>
<div style="position:absolute;left:24.5px;top:24.8px;width:7px;height:7px;border-radius:50%;background:#6b0a06"></div>
<svg style="position:absolute;left:481px;top:14.0px;" width="31" height="27" viewBox="0 0 31 27" ><path d="M1 5q0-3 3-3h7l3 3h13q3 0 3 3v15q0 3-3 3H4q-3 0-3-3z" fill="#8fc5ee"/><path d="M1 9q0-2 2-2h25q2 0 2 2v14q0 3-3 3H4q-3 0-3-3z" fill="#b7dcf8"/></svg>
<div style="position:absolute;left:520.2px;top:9.6px;font-size:26.5px;line-height:37px;color:#3d3840;font-weight:bold;letter-spacing:0.04px;white-space:nowrap;">saveaplaya</div>
<div style="position:absolute;left:700.9px;top:9.6px;font-size:26.5px;line-height:37px;color:#3d3840;font-weight:bold;letter-spacing:0.22px;white-space:nowrap;">root@instancepete:</div>
<div style="position:absolute;left:962px;top:9.6px;font-size:26.5px;line-height:37px;color:#3d3840;font-weight:bold;letter-spacing:0.41px;white-space:nowrap;">~/sites/ssl</div>
<div style="position:absolute;left:1131px;top:9.6px;font-size:26.5px;line-height:37px;color:#3d3840;font-weight:bold;transform:scaleX(0.9636);transform-origin:0 50%;white-space:nowrap;">ssh</div>
<div style="position:absolute;left:1182.7px;top:9.6px;font-size:26.5px;line-height:37px;color:#3d3840;font-weight:bold;letter-spacing:0.62px;white-space:nowrap;">root@35.193.161.207</div>
<div style="position:absolute;left:1493px;top:9.6px;font-size:26.5px;line-height:37px;color:#3d3840;font-weight:bold;letter-spacing:1.77px;white-space:nowrap;">147×34</div>
<div style="position:absolute;left:670.8px;top:27.7px;width:21.2px;height:3.200px;background:#3d3840"></div>
<div style="position:absolute;left:1102.0px;top:27.7px;width:20.5px;height:3.200px;background:#3d3840"></div>
<div style="position:absolute;left:1464.0px;top:27.7px;width:21.6px;height:3.200px;background:#3d3840"></div>
<div id="ttabs">
<div class="act" style="left:1037px;width:493px"></div>
<div class="sep" style="left:517.3px"></div>
<div class="sep" style="left:1036.3px"></div>
<div class="sep" style="left:1529.3px"></div>
<div class="sep" style="left:2021.8px"></div>
</div>
<div style="position:absolute;left:57px;top:68.5px;font-size:24.5px;line-height:34px;color:#7f7983;letter-spacing:0.25px;white-space:nowrap;">...ker compose -f mac.yml up --build</div>
<div style="position:absolute;left:487px;top:68.5px;font-size:26px;line-height:36px;color:#7f7983;font-weight:bold;transform:scaleX(0.9691);transform-origin:0 50%;white-space:nowrap;">...</div>
<div style="position:absolute;left:577px;top:68.5px;font-size:24.5px;line-height:34px;color:#7f7983;letter-spacing:-0.01px;white-space:nowrap;">...root@peteinstance: ~/sites — -zsh</div>
<div style="position:absolute;left:1094.8px;top:68.5px;font-size:24.5px;line-height:34px;color:#3f3a42;transform:scaleX(0.9624);transform-origin:0 50%;white-space:nowrap;">...s/ssl — ssh root@35.193.161.207</div>
<div style="position:absolute;left:1630px;top:68.5px;font-size:24.5px;line-height:34px;color:#7f7983;letter-spacing:0.05px;white-space:nowrap;">~/Sites/saveaplaya — -zsh</div>
<svg style="position:absolute;left:2038.5px;top:75.0px;" width="22" height="22" viewBox="0 0 22 22" ><path d="M11 1v20M1 11h20" stroke="#7a747d" stroke-width="2" fill="none"/></svg>
<pre id="tpre"><b class="g">nfig.php</b>
root@instancepete:~/sites/wordpresspeteorg/wp−content# cd ls
−bash: cd: ls: No such file or directory
root@instancepete:~/sites/wordpresspeteorg/wp−content# ls
<b class="g">advanced−cache.php</b>  <b class="b">cache</b>  <b class="g">debug.log</b>  <b class="b">et−cache</b>  <b class="g">index.php</b>  <b class="b">languages</b>  <b class="b">mu−plugins</b>  <b class="b">plugins</b>  <b class="b">sc−config</b>  <b class="b">themes</b>  <b class="b">upgrade</b>  <b class="b">uploads</b>  <b class="b">wflogs</b>  <b class="g">wp−cache−co</b>
<b class="g">nfig.php</b>
root@instancepete:~/sites/wordpresspeteorg/wp−content# cd wp−content
−bash: cd: wp−content: No such file or directory
root@instancepete:~/sites/wordpresspeteorg/wp−content# ls
<b class="g">advanced−cache.php</b>  <b class="b">cache</b>  <b class="g">debug.log</b>  <b class="b">et−cache</b>  <b class="g">index.php</b>  <b class="b">languages</b>  <b class="b">mu−plugins</b>  <b class="b">plugins</b>  <b class="b">sc−config</b>  <b class="b">themes</b>  <b class="b">upgrade</b>  <b class="b">uploads</b>  <b class="b">wflogs</b>  <b class="g">wp−cache−co</b>
<b class="g">nfig.php</b>
root@instancepete:~/sites/wordpresspeteorg/wp−content# cd wp−content
−bash: cd: wp−content: No such file or directory
root@instancepete:~/sites/wordpresspeteorg/wp−content# sl

Command 'sl' not found, but can be installed with:

apt install sl

root@instancepete:~/sites/wordpresspeteorg/wp−content# ls
<b class="g">advanced−cache.php</b>  <b class="b">cache</b>  <b class="g">debug.log</b>  <b class="b">et−cache</b>  <b class="g">index.php</b>  <b class="b">languages</b>  <b class="b">mu−plugins</b>  <b class="b">plugins</b>  <b class="b">sc−config</b>  <b class="b">themes</b>  <b class="b">upgrade</b>  <b class="b">uploads</b>  <b class="b">wflogs</b>  <b class="g">wp−cache−co</b>
<b class="g">nfig.php</b>
root@instancepete:~/sites/wordpresspeteorg/wp−content# cd
root@instancepete:~# ls
<b class="c">configs</b>  <b class="c">configse</b>  <b class="c">logs</b>  <b class="r">phpMyAdmin−5.2.0−all−languages.tar.gz</b>  <b class="r">phpMyAdmin−5.2.0−english.tar.gz</b>  <b class="c">sites</b>  <b class="b">snap</b>
root@instancepete:~# cd sites
root@instancepete:~/sites# ls
<b class="b">Pete</b>  done.txt  index.html  <b class="b">petetestingcom</b>  <b class="b">petetestingcom.well−known</b>  <b class="b">ssl</b>  <b class="r">wordpresspete7dec2022.tar.gz</b>  <b class="b">wwwlog</b>
root@instancepete:~/sites# cd ssl
root@instancepete:~/sites/ssl# ls
<b class="b">petetestingcom</b>
root@instancepete:~/sites/ssl# pwd
/root/sites/ssl
root@instancepete:~/sites/ssl# </pre>
<div class="brk l" style="top:149.1px"></div>
<div class="brk l" style="top:177.1px"></div>
<div class="brk l" style="top:233.1px"></div>
<div class="brk l" style="top:261.1px"></div>
<div class="brk l" style="top:317.1px"></div>
<div class="brk l" style="top:345.1px"></div>
<div class="brk l" style="top:989.1px"></div>
<div class="brk r" style="top:149.1px"></div>
<div class="brk r" style="top:177.1px"></div>
<div class="brk r" style="top:233.1px"></div>
<div class="brk r" style="top:261.1px"></div>
<div class="brk r" style="top:317.1px"></div>
<div class="brk r" style="top:345.1px"></div>
<div class="brk r" style="top:989.1px"></div>
<div style="position:absolute;left:444px;top:1040.5px;width:14px;height:28px;background:#9c9c9c"></div>
<svg style="position:absolute;left:1010px;top:902.5px;" width="70" height="130" viewBox="0 0 70 130" ><polygon points="20.8,14.9 54.9,47.4 42.7,50.0 58.2,116.6 55.2,118.3 26.4,56.1 15.0,62.7" fill="#f46b33"/></svg>
</div>
</div>

</div>
</body>
</html>
